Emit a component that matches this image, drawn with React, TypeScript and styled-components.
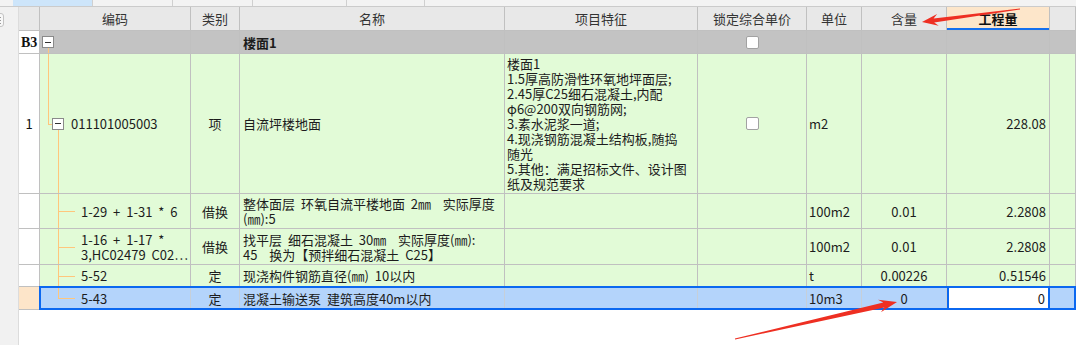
import React from "react";
import styled, { createGlobalStyle } from "styled-components";

const GlobalStyle = createGlobalStyle`
  html, body {
    margin: 0;
    padding: 0;
    background: #fff;
  }
  body {
    font-family: "Noto Sans CJK SC", "Noto Sans", sans-serif;
  }
`;

// column widths incl. right border: no., code, type, name, feature, lock, unit, qty, amount, rest
const COLS = "21px 151px 49px 265px 193px 109px 55px 85px 103px 1fr";
const GRID = "#c0c0c0";
const GREEN = "#e2fbd7";
const TREE = "#ffc67c";
const BLUE = "#0b68f0";

const Page = styled.div`
  position: relative;
  width: 1076px;
  height: 345px;
  overflow: hidden;
  display: flex;
  flex-direction: column;
  background: #fff;
`;

const TabStrip = styled.div`
  height: 7px;
  flex-shrink: 0;
  display: flex;
  box-sizing: border-box;
  background: #f3f3f3;
  border-bottom: 1px solid #cbcbcb;
`;

const Tab = styled.div<{ $w: number; $active?: boolean; $plain?: boolean }>`
  width: ${(p) => p.$w}px;
  box-sizing: border-box;
  background: ${(p) => (p.$active ? "#cde5fa" : "transparent")};
  border-right: ${(p) => (p.$plain ? "none" : "1px solid #d0d0d0")};
`;

const Body = styled.div`
  flex: 1;
  display: flex;
  min-height: 0;
`;

const SidePanel = styled.div`
  width: 19px;
  flex-shrink: 0;
  box-sizing: border-box;
  background: #f1f1f1;
  border-right: 1px solid #dcdcdc;
`;

const SideButton = styled.div`
  margin: 6px 0 0 -8px;
  width: 12px;
  height: 14px;
  box-sizing: border-box;
  border: 1px solid #c4c4c4;
  border-radius: 3px;
  background: #f8f8f8;
  display: flex;
  flex-direction: column;
  justify-content: center;
  align-items: flex-end;
  gap: 2px;
  padding-right: 2px;
  span {
    width: 2px;
    height: 1px;
    background: #9a9a9a;
  }
`;

const Sheet = styled.div`
  flex: 1;
  display: flex;
  flex-direction: column;
  background: #fff;
`;

const Row = styled.div<{ $h: number; $bg: string; $selected?: boolean }>`
  position: relative;
  display: grid;
  grid-template-columns: ${COLS};
  height: ${(p) => p.$h}px;
  flex-shrink: 0;
  box-sizing: border-box;
  border-bottom: 1px solid ${GRID};
  background: ${(p) => p.$bg};
  font-size: 13px;
  line-height: 15px;
  word-spacing: 3px;
  color: #1c1c1c;
  &::after {
    content: "";
    display: ${(p) => (p.$selected ? "block" : "none")};
    position: absolute;
    left: 20px;
    right: 0;
    top: -1px;
    bottom: -1px;
    border: 2px solid ${BLUE};
    pointer-events: none;
  }
`;

const Cell = styled.div<{
  $align?: "left" | "center" | "right";
  $top?: boolean;
  $bg?: string;
  $line?: string;
  $pad?: number;
}>`
  position: relative;
  box-sizing: border-box;
  min-width: 0;
  overflow: hidden;
  display: flex;
  flex-direction: column;
  justify-content: ${(p) => (p.$top ? "flex-start" : "center")};
  align-items: ${(p) =>
    p.$align === "center" ? "center" : p.$align === "right" ? "flex-end" : "flex-start"};
  padding: ${(p) => (p.$top ? "2px" : "0")} ${(p) => p.$pad ?? 2}px 0 ${(p) => p.$pad ?? 2}px;
  border-right: 1px solid ${(p) => p.$line ?? GRID};
  background: ${(p) => p.$bg ?? "transparent"};
  white-space: pre;
`;

const HeadCell = styled(Cell)<{ $active?: boolean }>`
  font-size: 13px;
  word-spacing: 0;
  color: ${(p) => (p.$active ? "#111" : "#333")};
  font-weight: ${(p) => (p.$active ? 700 : 400)};
  background: ${(p) => (p.$active ? "#fde6ca" : "transparent")};
  box-shadow: ${(p) => (p.$active ? `inset 0 -2px 0 #1570ee` : "none")};
`;

const NumCell = styled(Cell)<{ $serif?: boolean }>`
  background: ${(p) => p.$bg ?? "#fff"};
  font-family: ${(p) => (p.$serif ? `"Liberation Serif", serif` : "inherit")};
  font-weight: ${(p) => (p.$serif ? 700 : 400)};
  font-size: ${(p) => (p.$serif ? "14px" : "13px")};
  color: #111;
`;

const CodeCell = styled(Cell)<{ $indent: number }>`
  flex-direction: row;
  align-items: center;
  justify-content: flex-start;
  padding-left: ${(p) => p.$indent}px;
`;

const CodeText = styled.div`
  display: flex;
  flex-direction: column;
`;

const MinusBox = styled.span`
  width: 12px;
  height: 12px;
  flex-shrink: 0;
  box-sizing: border-box;
  border: 1px solid #8a8a8a;
  background: #fff;
  display: flex;
  align-items: center;
  justify-content: center;
  margin-right: 7px;
  &::before {
    content: "";
    width: 6px;
    height: 1px;
    background: #333;
  }
`;

const VLine = styled.span<{ $x: number; $from: string; $to: string }>`
  position: absolute;
  left: ${(p) => p.$x}px;
  top: ${(p) => p.$from};
  bottom: ${(p) => p.$to};
  width: 1px;
  background: ${TREE};
`;

const HLine = styled.span<{ $x: number; $w: number }>`
  position: absolute;
  left: ${(p) => p.$x}px;
  top: 50%;
  width: ${(p) => p.$w}px;
  height: 1px;
  background: ${TREE};
`;

const Check = styled.span`
  width: 13px;
  height: 13px;
  box-sizing: border-box;
  border: 1px solid #a2a2a2;
  border-radius: 2px;
  background: #fff;
`;

const Bold = styled.span`
  font-weight: 700;
`;

const Overlay = styled.svg`
  position: absolute;
  left: 0;
  top: 0;
  pointer-events: none;
`;

type Branch = "mid" | "last";

function Branches({ kind }: { kind: Branch }) {
  return (
    <>
      <VLine $x={18} $from="0" $to={kind === "last" ? "50%" : "-1px"} />
      <HLine $x={18} $w={17} />
    </>
  );
}

function arrow(x1: number, y1: number, x2: number, y2: number, tail: number, neck: number, len: number, head: number) {
  const L = Math.hypot(x2 - x1, y2 - y1);
  const ux = (x2 - x1) / L;
  const uy = (y2 - y1) / L;
  const nx = -uy;
  const ny = ux;
  const bx = x2 - ux * len;
  const by = y2 - uy * len;
  const nkx = x2 - ux * (len * 0.75);
  const nky = y2 - uy * (len * 0.75);
  const pts = [
    [x1 + (nx * tail) / 2, y1 + (ny * tail) / 2],
    [nkx + (nx * neck) / 2, nky + (ny * neck) / 2],
    [bx + (nx * head) / 2, by + (ny * head) / 2],
    [x2, y2],
    [bx - (nx * head) / 2, by - (ny * head) / 2],
    [nkx - (nx * neck) / 2, nky - (ny * neck) / 2],
    [x1 - (nx * tail) / 2, y1 - (ny * tail) / 2],
  ];
  return pts.map((p) => `${p[0].toFixed(1)},${p[1].toFixed(1)}`).join(" ");
}

const feature = [
  "楼面1",
  "1.5厚高防滑性环氧地坪面层;",
  "2.45厚C25细石混凝土,内配",
  "φ6@200双向钢筋网;",
  "3.素水泥浆一道;",
  "4.现浇钢筋混凝土结构板,随捣",
  "随光",
  "5.其他：满足招标文件、设计图",
  "纸及规范要求",
];

export default function App() {
  return (
    <Page>
      <GlobalStyle />
      <TabStrip>
        <Tab $w={13} $plain />
        <Tab $w={80} $active />
        <Tab $w={80} />
        <Tab $w={80} />
        <Tab $w={94} />
        <Tab $w={78} />
      </TabStrip>
      <Body>
        <SidePanel>
          <SideButton>
            <span />
            <span />
            <span />
          </SideButton>
        </SidePanel>
        <Sheet>
          <Row $h={24} $bg="#e8e8e8">
            <HeadCell />
            <HeadCell $align="center">编码</HeadCell>
            <HeadCell $align="center">类别</HeadCell>
            <HeadCell $align="center">名称</HeadCell>
            <HeadCell $align="center">项目特征</HeadCell>
            <HeadCell $align="center">锁定综合单价</HeadCell>
            <HeadCell $align="center">单位</HeadCell>
            <HeadCell $align="center">含量</HeadCell>
            <HeadCell $align="center" $active>工程量</HeadCell>
            <HeadCell />
          </Row>

          <Row $h={23} $bg="#c3c3c3">
            <NumCell $serif>B3</NumCell>
            <CodeCell $indent={2}>
              <MinusBox />
              <VLine $x={8} $from="calc(50% + 6px)" $to="-1px" />
            </CodeCell>
            <Cell />
            <Cell $pad={3}>
              <Bold>楼面1</Bold>
            </Cell>
            <Cell />
            <Cell $align="center">
              <Check />
            </Cell>
            <Cell />
            <Cell />
            <Cell />
            <Cell />
          </Row>

          <Row $h={140} $bg={GREEN}>
            <NumCell $align="center">1</NumCell>
            <CodeCell $indent={12}>
              <VLine $x={8} $from="0" $to="50%" />
              <HLine $x={8} $w={4} />
              <VLine $x={18} $from="calc(50% + 6px)" $to="-1px" />
              <MinusBox />
              <CodeText>011101005003</CodeText>
            </CodeCell>
            <Cell $align="center">项</Cell>
            <Cell $pad={3}>自流坪楼地面</Cell>
            <Cell $top>
              {feature.map((line) => (
                <div key={line}>{line}</div>
              ))}
            </Cell>
            <Cell $align="center">
              <Check />
            </Cell>
            <Cell>m2</Cell>
            <Cell />
            <Cell $align="right" $pad={3}>228.08</Cell>
            <Cell />
          </Row>

          <Row $h={35} $bg={GREEN}>
            <NumCell />
            <CodeCell $indent={41}>
              <Branches kind="mid" />
              <CodeText>1-29 + 1-31 * 6</CodeText>
            </CodeCell>
            <Cell $align="center">借换</Cell>
            <Cell $pad={3}>
              <div>整体面层 环氧自流平楼地面 2㎜  实际厚度</div>
              <div>(㎜):5</div>
            </Cell>
            <Cell />
            <Cell />
            <Cell>100m2</Cell>
            <Cell $align="center">0.01</Cell>
            <Cell $align="right" $pad={3}>2.2808</Cell>
            <Cell />
          </Row>

          <Row $h={36} $bg={GREEN}>
            <NumCell />
            <CodeCell $indent={41}>
              <Branches kind="mid" />
              <CodeText>
                <div>1-16 + 1-17 *</div>
                <div>3,HC02479 C02…</div>
              </CodeText>
            </CodeCell>
            <Cell $align="center">借换</Cell>
            <Cell $pad={3}>
              <div>找平层 细石混凝土 30㎜  实际厚度(㎜):</div>
              <div>45  换为【预拌细石混凝土 C25】</div>
            </Cell>
            <Cell />
            <Cell />
            <Cell>100m2</Cell>
            <Cell $align="center">0.01</Cell>
            <Cell $align="right" $pad={3}>2.2808</Cell>
            <Cell />
          </Row>

          <Row $h={22} $bg={GREEN}>
            <NumCell />
            <CodeCell $indent={41}>
              <Branches kind="mid" />
              <CodeText>5-52</CodeText>
            </CodeCell>
            <Cell $align="center">定</Cell>
            <Cell $pad={3}>现浇构件钢筋直径(㎜) 10以内</Cell>
            <Cell />
            <Cell />
            <Cell>t</Cell>
            <Cell $align="center">0.00226</Cell>
            <Cell $align="right" $pad={3}>0.51546</Cell>
            <Cell />
          </Row>

          <Row $h={23} $bg="#b4d4fb" $selected>
            <NumCell $bg="#fde5c9" />
            <CodeCell $indent={41} $line="#c6cfd9">
              <Branches kind="last" />
              <CodeText>5-43</CodeText>
            </CodeCell>
            <Cell $align="center" $line="#c6cfd9">定</Cell>
            <Cell $pad={3} $line="#c6cfd9">混凝土输送泵 建筑高度40m以内</Cell>
            <Cell $line="#c6cfd9" />
            <Cell $line="#c6cfd9" />
            <Cell $line="#c6cfd9">10m3</Cell>
            <Cell $align="center" $line="#c6cfd9">0</Cell>
            <Cell
              $align="right"
              $pad={4}
              $bg="#fff"
              $line={BLUE}
              style={{ boxShadow: `inset 2px 0 0 ${BLUE}, inset -1px 0 0 ${BLUE}` }}
            >
              0
            </Cell>
            <Cell $line="transparent" />
          </Row>
        </Sheet>
      </Body>

      <Overlay width={1076} height={345} viewBox="0 0 1076 345">
        <polygon points={arrow(1020, 9, 922, 22, 1, 4, 16, 12)} fill="#ee2f22" />
        <polygon points={arrow(735, 339, 897, 302, 1, 5, 18, 13)} fill="#ee2f22" />
      </Overlay>
    </Page>
  );
}
